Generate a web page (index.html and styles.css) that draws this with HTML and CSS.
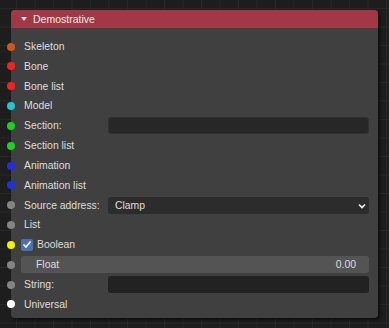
FILE: index.html
```html
<!DOCTYPE html>
<html lang="en">
<head>
  <meta charset="UTF-8">
  <meta name="viewport" content="width=device-width, initial-scale=1.0">
  <title>Node Editor</title>
  <link rel="stylesheet" href="styles.css">
</head>
<body>
  <div class="canvas">
    <div class="node">
      <div class="node-header">
        <svg class="collapse" width="6" height="4" viewBox="0 0 6 4"><polygon points="0,0 6,0 3,4" fill="#e8e8e8"/></svg>
        <span>Demostrative</span>
      </div>
      <div class="node-body">
        <div class="row"><span class="socket" style="background:#d1561a"></span><span class="label">Skeleton</span></div>
        <div class="row"><span class="socket" style="background:#ff1f1f"></span><span class="label">Bone</span></div>
        <div class="row"><span class="socket" style="background:#ff1f1f"></span><span class="label">Bone list</span></div>
        <div class="row"><span class="socket" style="background:#1fc7cf"></span><span class="label">Model</span></div>
        <div class="row"><span class="socket" style="background:#1fd11f"></span><span class="label prop">Section:</span><div class="field text"></div></div>
        <div class="row"><span class="socket" style="background:#1fd11f"></span><span class="label">Section list</span></div>
        <div class="row"><span class="socket" style="background:#1f2fe8"></span><span class="label">Animation</span></div>
        <div class="row"><span class="socket" style="background:#1f2fe8"></span><span class="label">Animation list</span></div>
        <div class="row"><span class="socket" style="background:#848484"></span><span class="label prop">Source address:</span>
          <div class="field select"><span>Clamp</span>
            <svg width="8" height="6" viewBox="0 0 8 6"><polyline points="1,1.5 4,4.5 7,1.5" fill="none" stroke="#f0f0f0" stroke-width="1.6"/></svg>
          </div>
        </div>
        <div class="row"><span class="socket" style="background:#848484"></span><span class="label">List</span></div>
        <div class="row wide"><span class="socket" style="background:#f2f200"></span>
          <span class="checkbox"><svg width="10" height="9" viewBox="0 0 10 9"><polyline points="1.5,4.5 4,7 8.5,1.5" fill="none" stroke="#fff" stroke-width="1.6"/></svg></span>
          <span class="label">Boolean</span>
        </div>
        <div class="row wide"><span class="socket" style="background:#848484"></span>
          <div class="field number"><span>Float</span><span>0.00</span></div>
        </div>
        <div class="row"><span class="socket" style="background:#848484"></span><span class="label prop">String:</span><div class="field string"></div></div>
        <div class="row"><span class="socket" style="background:#ffffff"></span><span class="label">Universal</span></div>
      </div>
    </div>
  </div>
</body>
</html>
```

FILE: styles.css
```css
body {
  margin: 0;
  font-family: 'Liberation Sans', Arial, sans-serif;
  font-size: 10.4px;
  color: #dedede;
}
.canvas {
  width: 389px;
  height: 328px;
  overflow: hidden;
  background-color: #1d1d1d;
  background-image:
    linear-gradient(to right, #282828 1px, transparent 1px),
    linear-gradient(to bottom, #282828 1px, transparent 1px);
  background-size: 18.5px 18.5px;
  background-position: 16px 8px;
  padding: 10px 0 0 11px;
  box-sizing: border-box;
}
.node {
  width: 367px;
  height: 308px;
  border-radius: 4px;
  background-color: rgba(66, 66, 66, 0.96);
  box-shadow: 2px 2px 3px rgba(0, 0, 0, 0.55);
}
.node-header {
  height: 18px;
  display: flex;
  align-items: center;
  padding-left: 10px;
  background-color: #a23845;
  border-radius: 4px 4px 0 0;
  color: #ececec;
  font-size: 10.5px;
}
.collapse {
  margin-right: 6px;
}
.node-body {
  display: flex;
  flex-direction: column;
  padding: 8.6px 9px 0 13px;
}
.row {
  position: relative;
  height: 19.83px;
  display: flex;
  align-items: center;
}
.row.wide {
  margin-left: -3px;
}
.socket {
  position: absolute;
  left: -17px;
  top: 6px;
  width: 8px;
  height: 8px;
  border-radius: 50%;
}
.row.wide .socket {
  left: -14px;
}
.label.prop {
  width: 84px;
  flex-shrink: 0;
}
.field {
  flex: 1;
  height: 17px;
  border-radius: 3px;
  box-sizing: border-box;
  display: flex;
  align-items: center;
}
.field.text {
  background-color: #272727;
  border: 1px solid #303030;
}
.field.select {
  background-color: #2c2c2c;
  justify-content: space-between;
  padding: 0 3px 0 7px;
}
.field.select svg {
  margin-top: 1px;
}
.field.number {
  background-color: #545454;
  justify-content: space-between;
  padding: 0 13px 0 15px;
}
.field.string {
  background-color: #222222;
}
.checkbox {
  width: 12px;
  height: 12px;
  border-radius: 2px;
  background-color: #4a72b2;
  display: flex;
  align-items: center;
  justify-content: center;
  margin-right: 4px;
}
```
